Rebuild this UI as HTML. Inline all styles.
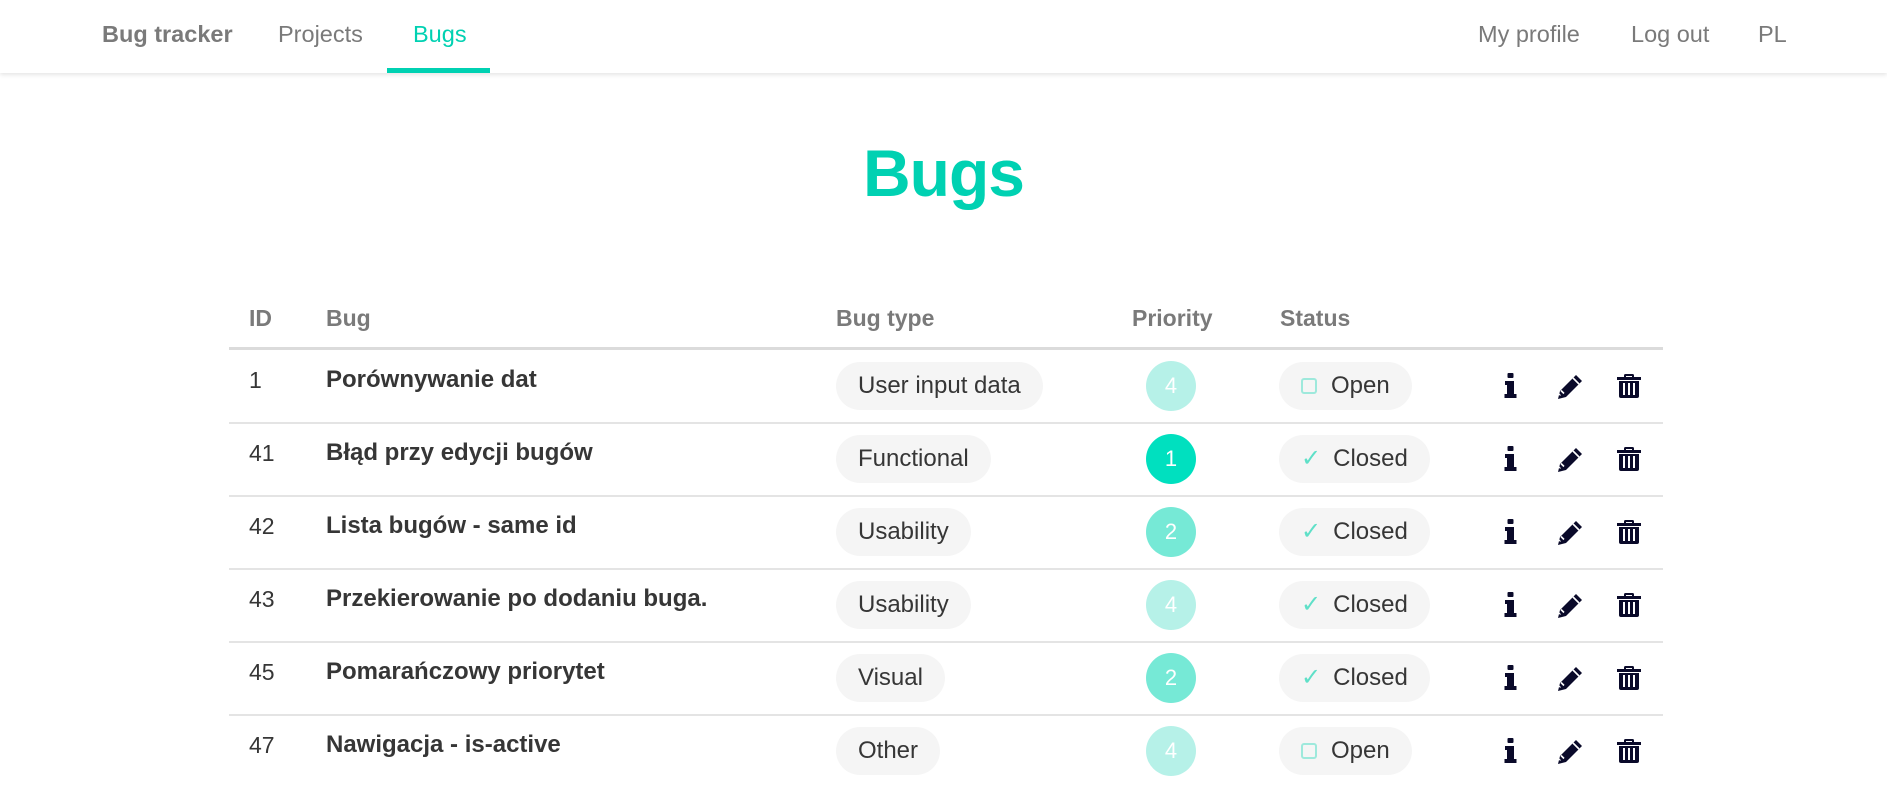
<!DOCTYPE html>
<html><head><meta charset="utf-8"><style>
*{box-sizing:border-box;margin:0;padding:0}
body{width:1887px;height:790px;overflow:hidden;background:#fff;font-family:"Liberation Sans",Arial,sans-serif;color:#363636;position:relative}
.nav{position:absolute;left:0;top:0;width:1887px;height:73px;background:#fff;box-shadow:0 2px 4px rgba(0,0,0,.1)}
.nav a{position:absolute;top:21px;font-size:23.5px;color:#7a7a7a;text-decoration:none}
.ul{position:absolute;left:387px;top:68px;width:103px;height:5px;background:#00d1b2}
h1{position:absolute;left:0;width:1887px;top:135px;text-align:center;font-size:66px;color:#00d1b2;font-weight:bold;letter-spacing:-1px}
.hdr{position:absolute;top:305px;font-size:23px;font-weight:bold;color:#7a7a7a}
.hl{position:absolute;left:229px;width:1434px;top:347px;height:3px;background:#dbdbdb}
.rl{position:absolute;left:229px;width:1434px;height:2px;background:#e4e4e4}
.c{position:absolute;font-size:23px}
.pill{position:absolute;height:48px;border-radius:24px;background:#f5f5f5;font-size:24px;line-height:48px;padding:0 22px;color:#363636}
.pr{position:absolute;left:1146px;width:50px;height:50px;border-radius:50%;color:#fff;font-size:22px;line-height:50px;text-align:center}
.ic{position:absolute}
</style></head><body>
<div class="nav">
<a style="left:102px;font-weight:bold">Bug tracker</a>
<a style="left:278px">Projects</a>
<a style="left:413px;color:#00d1b2">Bugs</a>
<a style="left:1478px">My profile</a>
<a style="left:1631px">Log out</a>
<a style="left:1758px">PL</a>
<div class="ul"></div>
</div>
<h1>Bugs</h1>
<div class="hdr" style="left:249px">ID</div>
<div class="hdr" style="left:326px">Bug</div>
<div class="hdr" style="left:836px">Bug type</div>
<div class="hdr" style="left:1132px">Priority</div>
<div class="hdr" style="left:1280px">Status</div>
<div class="hl"></div>
<div id="rows"></div>
<script>
var d=[["1","Porównywanie dat","User input data","4",0],["41","Błąd przy edycji bugów","Functional","1",1],["42","Lista bugów - same id","Usability","2",1],["43","Przekierowanie po dodaniu buga.","Usability","4",1],["45","Pomarańczowy priorytet","Visual","2",1],["47","Nawigacja - is-active","Other","4",0]];
var col={"1":"#00e0bf","2":"#76e9d6","4":"#b6f1e8"};
var h="";
d.forEach(function(r,i){
var t=350+i*73, cy=t+36;
h+='<div class="c" style="left:249px;top:'+(cy-19)+'px">'+r[0]+'</div>';
h+='<div class="c" style="left:326px;top:'+(cy-20)+'px;font-weight:bold;font-size:24px">'+r[1]+'</div>';
h+='<div class="pill" style="left:836px;top:'+(cy-24)+'px">'+r[2]+'</div>';
h+='<div class="pr" style="top:'+(cy-25)+'px;background:'+col[r[3]]+'">'+r[3]+'</div>';
var st=r[4]?'<span style="color:#5fe0c8;font-size:24px;margin-right:12px">✓</span>Closed':'<span style="display:inline-block;width:16px;height:16px;border:2px solid #9ee9dc;border-radius:3px;margin-right:14px;vertical-align:-1px"></span>Open';
h+='<div class="pill" style="left:1279px;top:'+(cy-24)+'px;padding:0 22px">'+st+'</div>';
h+='<svg class="ic" style="left:1504px;top:'+(cy-13)+'px" width="13" height="25" viewBox="0 0 13 25"><rect x="3.5" y="0" width="6" height="5" rx="1" fill="#0a0a2a"/><path d="M1 8h9v13h2.5v4H0.5v-4H3v-9H1z" fill="#0a0a2a"/></svg>';
h+='<svg class="ic" style="left:1555px;top:'+(cy-12)+'px" width="28" height="25" viewBox="0 0 28 25"><path d="M21 1l6 6-16 16-8 2 2-8z" fill="#0a0a2a"/><path d="M18 4l6 6M6 16.5l3 3" stroke="#fff" stroke-width="1.6"/><path d="M3.5 19.5l2 2" stroke="#fff" stroke-width="1.2"/></svg>';
h+='<svg class="ic" style="left:1616px;top:'+(cy-13)+'px" width="26" height="26" viewBox="0 0 26 26"><path d="M8 4V2.5Q8 1 9.5 1h7Q18 1 18 2.5V4h7v3H1V4z M10 4h6V3h-6z" fill="#0a0a2a" fill-rule="evenodd"/><path d="M3 8h20v15q0 2-2 2H5q-2 0-2-2z" fill="#0a0a2a"/><rect x="7" y="10" width="2" height="12" fill="#fff"/><rect x="12" y="10" width="2" height="12" fill="#fff"/><rect x="17" y="10" width="2" height="12" fill="#fff"/></svg>';
if(i<5)h+='<div class="rl" style="top:'+(t+72)+'px"></div>';
});
document.getElementById("rows").innerHTML=h;
</script>
</body></html>
